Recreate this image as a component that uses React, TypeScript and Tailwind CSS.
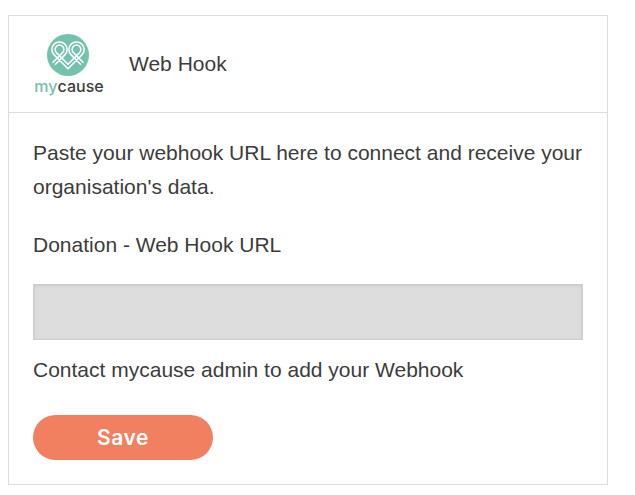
import React from 'react';

function Logo() {
  return (
    <div className="flex w-[68px] flex-col items-center pt-[1px]">
      <svg width="44" height="44" viewBox="0 0 44 44" className="block">
        <circle cx="22" cy="22" r="21" fill="#74c1ae" />
        <g fill="none" stroke="#fff" strokeWidth="1.5" strokeLinejoin="miter">
          <path d="M9 31.740 L18.870 21.870 A7.600 7.600 0 1 0 8.130 21.870 L22 35.740 L35.870 21.870 A7.600 7.600 0 1 0 25.130 21.870 L35 31.740" />
          <path d="M6.500 29.720 L16.610 19.610 A4.400 4.400 0 1 0 10.390 19.610 L22 31.220 L33.610 19.610 A4.400 4.400 0 1 0 27.390 19.610 L37.500 29.720" />
        </g>
      </svg>
      <div className="ml-[2px] flex font-['Inter',sans-serif] text-[16px] leading-[19px] font-medium">
        <span className="text-[#74c1ae]">my</span>
        <span className="text-[#3d3d3d]">cause</span>
      </div>
    </div>
  );
}

export default function App() {
  return (
    <div className="min-h-[495px] bg-white pt-[15px] pl-2 font-['Liberation_Sans',Arial,sans-serif] text-[#3c3c3c]">
      <div className="h-[470px] w-[600px] border border-[#dddddd]">
        {/* Header */}
        <div className="flex h-[97px] items-center gap-[27px] border-b border-[#dddddd] pl-[25px]">
          <Logo />
          <h2 className="text-[21px] leading-7 font-normal">Web Hook</h2>
        </div>

        {/* Body */}
        <div className="px-6 pt-[23px]">
          <p className="text-[21px] leading-[34px]">
            Paste your webhook URL here to connect and receive your organisation's data.
          </p>
          <p className="mt-[24px] text-[21px] leading-[34px]">Donation - Web Hook URL</p>
          <input
            disabled
            className="mt-[22px] block h-[56px] w-[550px] border border-[#cccccc] bg-[#dddddd] shadow-[inset_0_1px_3px_rgba(0,0,0,0.1)]"
          />
          <p className="mt-[13px] text-[21px] leading-[34px]">Contact mycause admin to add your Webhook</p>
          <button className="mt-[28px] block h-[45px] w-[180px] rounded-full bg-[#f08060] font-['Inter',sans-serif] text-[21px] font-semibold tracking-[0.6px] text-white">
            Save
          </button>
        </div>
      </div>
    </div>
  );
}
